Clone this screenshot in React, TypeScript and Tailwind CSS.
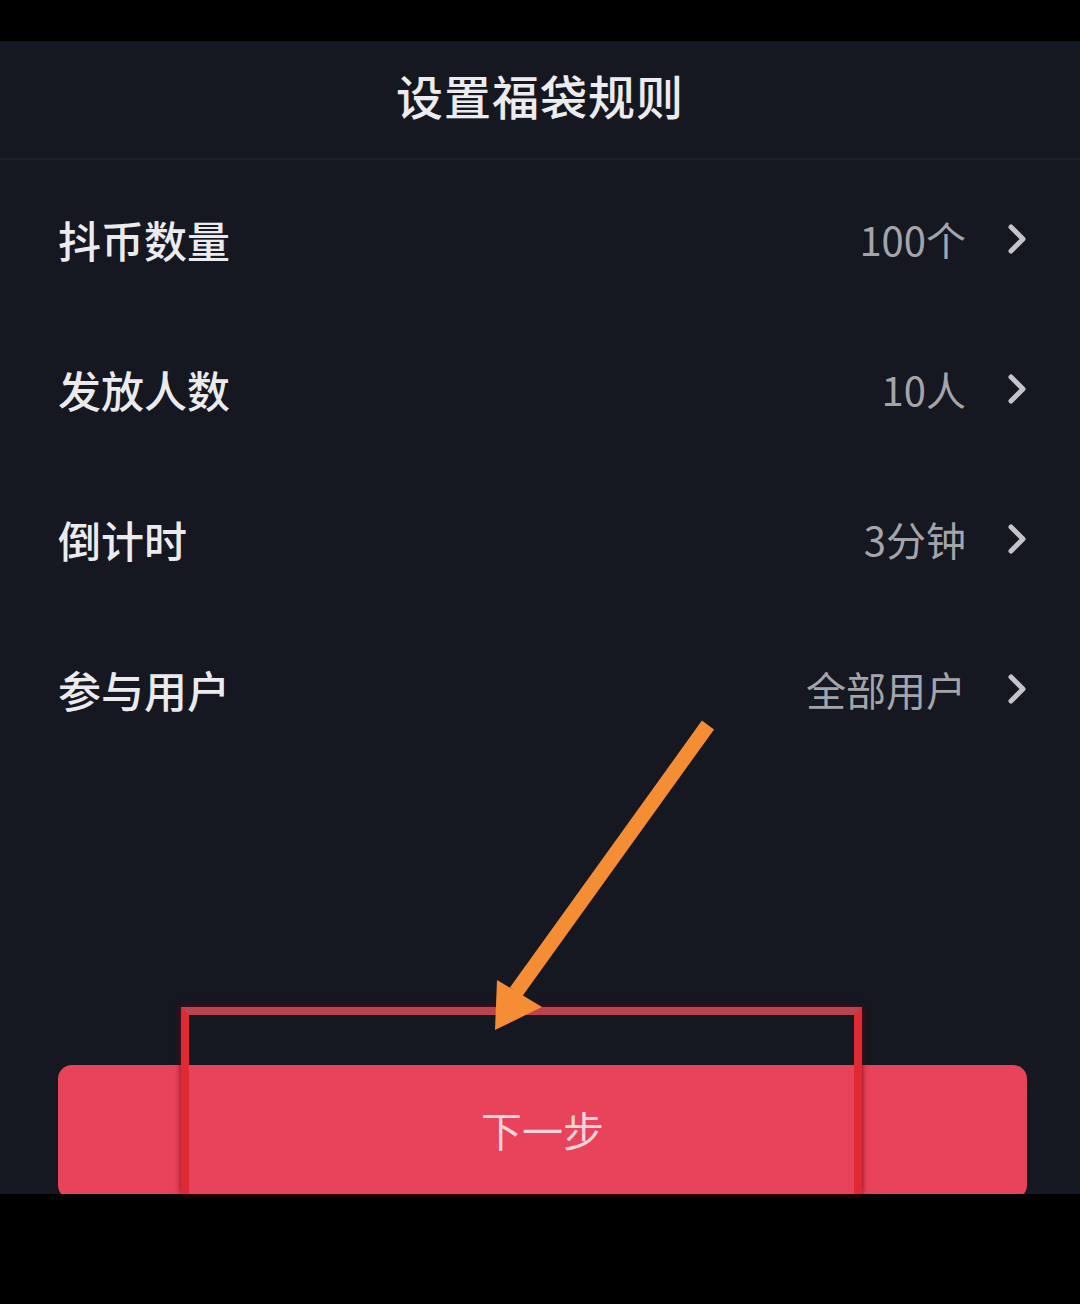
import React from "react";

const rows = [
  { label: "抖币数量", value: "100个" },
  { label: "发放人数", value: "10人" },
  { label: "倒计时", value: "3分钟" },
  { label: "参与用户", value: "全部用户" },
];

function Chevron() {
  return (
    <svg width="26" height="32" viewBox="0 0 26 32" className="ml-[38px] shrink-0">
      <path d="M7 4 L19 16 L7 28" fill="none" stroke="#c4c5ca" strokeWidth="5" strokeLinecap="round" strokeLinejoin="round" />
    </svg>
  );
}

export default function App() {
  return (
    <div
      className="relative w-[1080px] h-[1304px] bg-black overflow-hidden"
      style={{ fontFamily: '"Noto Sans CJK SC", "Noto Sans", sans-serif' }}
    >
      <div className="h-[41px] bg-black" />
      <div className="relative h-[1153px] bg-[#151721] overflow-hidden flex flex-col">
        <div className="h-[119px] flex items-center justify-center border-b-2 border-[#1c1e28]">
          <span className="-mt-[10px] text-[47px] leading-none font-medium text-[#ececee] tracking-[1px]">设置福袋规则</span>
        </div>
        <div className="pt-[4px] flex flex-col">
          {rows.map((r) => (
            <div key={r.label} className="h-[150px] flex items-center pl-[58px] pr-[50px]">
              <span className="text-[43px] leading-none font-medium text-[#ebebed]">{r.label}</span>
              <span className="ml-auto text-[40px] leading-none text-[#a3a5ab]">{r.value}</span>
              <Chevron />
            </div>
          ))}
        </div>
        <div className="mt-auto px-[53px] pl-[58px]">
          <div className="h-[134px] -mb-[5px] rounded-[14px] bg-[#e8435a] flex items-center justify-center">
            <span className="text-[41px] leading-none text-[#f6d3d8] -mt-[5px]">下一步</span>
          </div>
        </div>
      </div>

      {/* annotation: red box */}
      <div className="absolute left-[181px] top-[1007px] w-[681px] h-[187px] border-[8px] border-b-0 border-[#df2a33] border-t-[#b9434e] shadow-[0_0_6px_rgba(120,0,10,0.9)]" />

      {/* annotation: orange arrow */}
      <svg className="absolute left-0 top-0 pointer-events-none" width="1080" height="1304" viewBox="0 0 1080 1304">
        <line x1="708" y1="725" x2="516" y2="992" stroke="#f48d34" strokeWidth="15" />
        <polygon points="497,980 542,1007 495,1030" fill="#f48d34" />
      </svg>
    </div>
  );
}
